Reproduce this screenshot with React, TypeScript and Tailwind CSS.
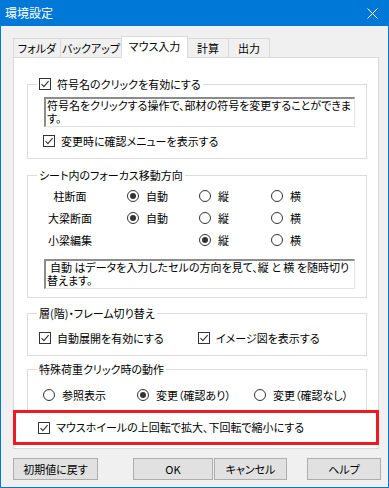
import React from "react";

function CheckBox() {
  return (
    <span className="flex h-[12px] w-[12px] shrink-0 items-center justify-center border border-[#333] bg-white">
      <svg width="10" height="10" viewBox="0 0 10 10">
        <path d="M1.5 5.2l2.4 2.4L8.6 2.2" fill="none" stroke="#333" strokeWidth="1.1" />
      </svg>
    </span>
  );
}

function Radio({ on }: { on?: boolean }) {
  return (
    <span className="flex h-[12px] w-[12px] shrink-0 items-center justify-center rounded-full border border-[#333] bg-white">
      {on && <span className="h-[6px] w-[6px] rounded-full bg-[#333]" />}
    </span>
  );
}

function Check({ label }: { label: string }) {
  return (
    <div className="flex items-center gap-[6px]">
      <CheckBox />
      <span className="whitespace-nowrap">{label}</span>
    </div>
  );
}

function Option({ label, on }: { label: string; on?: boolean }) {
  return (
    <div className="flex items-center gap-[7px]">
      <Radio on={on} />
      <span className="whitespace-nowrap">{label}</span>
    </div>
  );
}

function Group({ title, className, children }: { title: React.ReactNode; className: string; children: React.ReactNode }) {
  return (
    <div className={`relative ml-[13px] mr-[11px] border border-[#dcdcdc] ${className}`}>
      <div className="absolute -top-[8px] left-[9px] bg-white px-[2px] leading-[14px]">{title}</div>
      {children}
    </div>
  );
}

function Note({ children }: { children: React.ReactNode }) {
  return (
    <div className="ml-[16px] h-[30px] w-[311px] whitespace-nowrap border-t-2 border-l-2 border-r border-b border-t-[#8c8c8c] border-l-[#8c8c8c] border-r-[#e3e3e3] border-b-[#e3e3e3] bg-white pl-[1px] leading-[13px]">
      {children}
    </div>
  );
}

const rows = [
  { name: "柱断面", auto: true, sel: 0 },
  { name: "大梁断面", auto: true, sel: 0 },
  { name: "小梁編集", auto: false, sel: 1 },
];

export default function App() {
  return (
    <div className="flex h-[488px] w-[389px] flex-col bg-[#0078d7] font-['Noto_Sans_CJK_JP','Noto_Sans',sans-serif] text-[11px] text-black [font-feature-settings:'palt']">
      {/* タイトルバー */}
      <div className="flex h-[26px] shrink-0 items-center justify-between pl-[5px] pr-[11px] text-[12px] text-white">
        <span>環境設定</span>
        <svg width="11" height="11" viewBox="0 0 11 11">
          <path d="M0.5 0.5l10 10M10.5 0.5l-10 10" stroke="#fff" strokeWidth="1" />
        </svg>
      </div>

      <div className="mx-px mb-px flex-1 bg-[#f0f0f0] pt-[10px]">
        {/* タブ */}
        <div className="ml-[12px] flex h-[21px] items-end">
          <div className="flex h-[19px] w-[48px] items-center justify-center border border-b-0 border-[#d9d9d9] bg-[#f0f0f0]">フォルダ</div>
          <div className="-ml-px flex h-[19px] w-[62px] items-center justify-center border border-b-0 border-[#d9d9d9] bg-[#f0f0f0]">バックアップ</div>
          <div className="relative z-10 -mb-px -ml-px flex h-[22px] w-[67px] items-center justify-center border border-b-0 border-[#d9d9d9] bg-white pb-[2px]">マウス入力</div>
          <div className="-ml-px flex h-[19px] w-[42px] items-center justify-center border border-b-0 border-[#d9d9d9] bg-[#f0f0f0]">計算</div>
          <div className="-ml-px flex h-[19px] w-[42px] items-center justify-center border border-b-0 border-[#d9d9d9] bg-[#f0f0f0]">出力</div>
        </div>

        {/* タブページ */}
        <div className="ml-[12px] flex h-[392px] w-[366px] flex-col border border-[#d9d9d9] bg-white pt-[26px]">
          <Group className="h-[75px] pt-[12px]" title={<Check label="符号名のクリックを有効にする" />}>
            <Note>
              符号名をクリックする操作で、部材の符号を変更することができま
              <br />す。
            </Note>
            <div className="ml-[15px] mt-[4px] flex h-[20px] items-center">
              <Check label="変更時に確認メニューを表示する" />
            </div>
          </Group>

          <Group className="mt-[16px] h-[123px] pt-[9px]" title="シート内のフォーカス移動方向">
            {rows.map(r => (
              <div key={r.name} className="flex h-[22px] items-center">
                <div className="ml-[17px] w-[50px] text-center">{r.name}</div>
                <div className="ml-[32px] w-[72px]">{r.auto && <Option label="自動" on={r.sel === 0} />}</div>
                <div className="w-[72px]">
                  <Option label="縦" on={r.sel === 1} />
                </div>
                <Option label="横" />
              </div>
            ))}
            <div className="mt-[8px]">
              <Note>
                <span className="pl-[3px]">自動&nbsp;はデータを入力したセルの方向を見て、縦&nbsp;と&nbsp;横&nbsp;を随時切り</span>
                <br />替えます。
              </Note>
            </div>
          </Group>

          <Group className="mt-[15px] h-[43px] pt-[14px]" title="層(階)・フレーム切り替え">
            <div className="flex h-[20px] items-center pl-[11px]">
              <div className="w-[159px]">
                <Check label="自動展開を有効にする" />
              </div>
              <Check label="イメージ図を表示する" />
            </div>
          </Group>

          <Group className="mt-[13px] h-[43px] pt-[15px]" title="特殊荷重クリック時の動作">
            <div className="flex h-[20px] items-center pl-[15px]">
              <div className="w-[94px]">
                <Option label="参照表示" />
              </div>
              <div className="w-[117px]">
                <Option label="変更（確認あり）" on />
              </div>
              <Option label="変更（確認なし）" />
            </div>
          </Group>

          {/* 注記枠 */}
          <div className="relative z-10 -mx-px -mt-[2px] flex h-[35px] items-center border-[3px] border-[#ed1c24] bg-white pl-[22px]">
            <Check label="マウスホイールの上回転で拡大、下回転で縮小にする" />
          </div>
        </div>

        {/* ボタン */}
        <div className="ml-[12px] mt-[9px] flex h-[22px]">
          <button className="w-[85px] border border-[#adadad] bg-[#e1e1e1]">初期値に戻す</button>
          <button className="ml-[35px] w-[80px] border border-[#adadad] bg-[#e1e1e1]">OK</button>
          <button className="ml-px w-[73px] border border-[#adadad] bg-[#e1e1e1]">キャンセル</button>
          <button className="ml-[20px] w-[74px] border border-[#adadad] bg-[#e1e1e1]">ヘルプ</button>
        </div>
      </div>
    </div>
  );
}
